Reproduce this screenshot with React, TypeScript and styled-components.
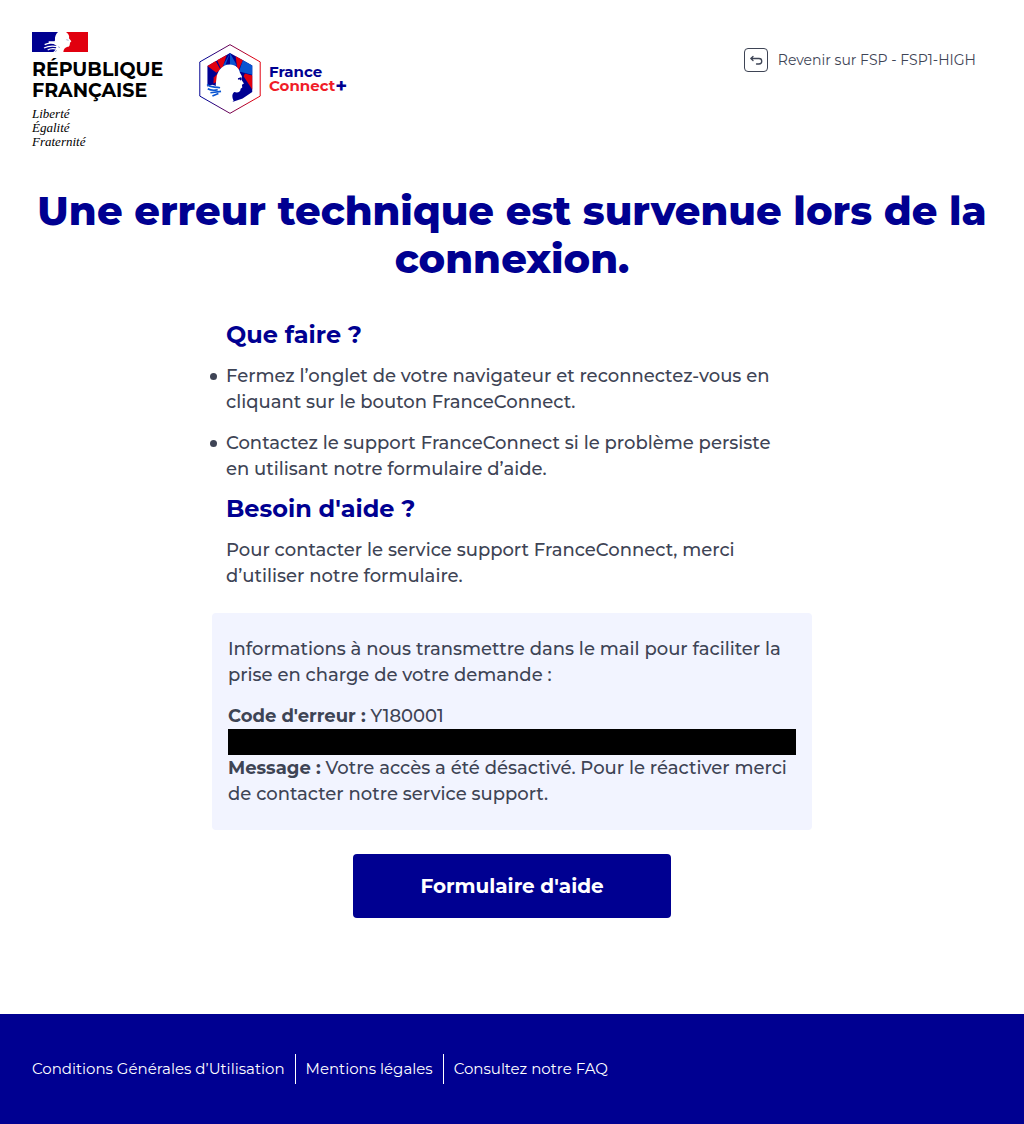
import React from "react";
import styled, { createGlobalStyle } from "styled-components";

const navy = "#000091";
const red = "#e1000f";
const azure = "#0a55d1";
const grey = "#3e4455";
const sans = `Montserrat, Inter, "Open Sans", "Liberation Sans", sans-serif`;

const GlobalStyle = createGlobalStyle`
  * { box-sizing: border-box; }
  body { margin: 0; background: #fff; color: ${grey}; font-family: ${sans}; }
  h1, h2, p, ul { margin: 0; padding: 0; }
`;

const Page = styled.div`
  display: flex;
  flex-direction: column;
  min-height: 100vh;
`;

const Header = styled.header`
  display: flex;
  align-items: flex-start;
  gap: 40px;
  padding: 32px 48px 0 32px;
`;

const StateLogo = styled.div`
  display: flex;
  flex-direction: column;
  width: 127px;
`;

const Flag = styled.svg`
  display: block;
  width: 56px;
  height: 20px;
`;

const StateName = styled.span`
  margin: 7px 0 6px;
  color: #000;
  font: 700 19px/21px ${sans};
  white-space: nowrap;
`;

const Motto = styled.span`
  color: #000;
  font: italic 400 13px/14px "Liberation Serif", serif;
`;

const ServiceLogo = styled.div`
  display: flex;
  align-items: center;
  gap: 8px;
  margin-top: 12px;
`;

const Hexagon = styled.svg`
  display: block;
  width: 62px;
  height: 70px;
`;

const ServiceName = styled.span<{ $color: string }>`
  display: flex;
  align-items: center;
  height: 14px;
  color: ${(p) => p.$color};
  font: 700 15px/14px ${sans};
`;

const Plus = styled.span`
  color: ${navy};
  font-size: 20px;
  font-weight: 700;
`;

const BackLink = styled.a`
  display: flex;
  align-items: center;
  gap: 10px;
  margin: 16px 0 0 auto;
  color: ${grey};
  font-size: 14px;
  line-height: 24px;
  font-weight: 400;
  text-decoration: none;
`;

const BackIcon = styled.svg`
  display: block;
  width: 24px;
  height: 24px;
`;

const Main = styled.main`
  display: flex;
  flex: 1;
  flex-direction: column;
  align-items: center;
  padding: 38px 32px 96px;
`;

const Title = styled.h1`
  margin-bottom: 36px;
  color: ${navy};
  font-size: 40px;
  line-height: 48px;
  font-weight: 800;
  text-align: center;
`;

const Content = styled.div`
  display: flex;
  flex-direction: column;
  gap: 24px;
  width: 100%;
  max-width: 600px;
`;

const Sections = styled.div`
  display: flex;
  flex-direction: column;
  gap: 11px;
  padding: 0 14px;
`;

const Subtitle = styled.h2`
  padding-bottom: 1px;
  color: ${navy};
  font-size: 24px;
  line-height: 32px;
  font-weight: 700;
`;

const Text = styled.p`
  font-size: 18px;
  line-height: 26px;
  font-weight: 500;
`;

const Steps = styled.ul`
  display: flex;
  flex-direction: column;
  gap: 15px;
  list-style: none;
`;

const Step = styled.li`
  display: flex;
  gap: 9px;
  margin-left: -16px;

  &::before {
    content: "";
    flex: none;
    width: 7px;
    height: 7px;
    margin-top: 10px;
    border-radius: 50%;
    background: ${grey};
  }
`;

const InfoBox = styled.section`
  display: flex;
  flex-direction: column;
  gap: 15px;
  padding: 23px 16px;
  border-radius: 4px;
  background: #f2f4ff;
`;

const Redacted = styled.div`
  height: 26px;
  background: #000;
`;

const HelpButton = styled.button`
  align-self: center;
  width: 318px;
  max-width: 100%;
  height: 64px;
  border: 0;
  border-radius: 4px;
  background: ${navy};
  color: #fff;
  font: 700 20px/24px ${sans};
  cursor: pointer;
`;

const Footer = styled.footer`
  padding: 40px 32px;
  background: ${navy};
`;

const FooterNav = styled.nav`
  display: flex;
  flex-wrap: wrap;
`;

const FooterLink = styled.a`
  padding: 0 10px;
  color: #fff;
  font-size: 15px;
  line-height: 30px;
  text-decoration: none;

  &:first-child { padding-left: 0; }
  & + & { border-left: 1px solid #fff; }
`;

const FrenchFlag = () => (
  <Flag viewBox="0 0 168 60" aria-hidden="true">
    <path fill={navy} d="M0 0H78C72 6 68 14 69 24L66 36 74 42 70 54 64 60H0Z" />
    <path fill={red} d="M102 0H168V60H94C95 51 99 46 107 44C114 44 112 38 114 35C112 32 116 31 118 28L111 19C113 12 110 6 102 0Z" />
    <path fill="none" stroke="#fff" strokeWidth="4" d="M38 38C48 32 60 32 73 36M36 48C48 42 58 40 76 44M47 54C55 49 64 48 77 52M50 30H73" />
    <path fill="none" stroke="#7d86bd" strokeWidth="2" d="M103 23L110 25M78 44L84 47M75 55L68 60" />
  </Flag>
);

const MarianneHexagon = () => (
  <Hexagon viewBox="12 11 186 211" aria-hidden="true">
    <defs>
      <linearGradient id="edge" x1="0" x2="1">
        <stop offset="0.1" stopColor={navy} />
        <stop offset="0.9" stopColor={red} />
      </linearGradient>
    </defs>
    <path fill="none" stroke="url(#edge)" strokeWidth="3" strokeLinejoin="round" d="M105 13L196 65V168L105 220L14 168V65Z" />
    <path fill={navy} d="M105 38L172 76V156L143 175 112 186 60 150 37 142V77Z" />
    <path fill={red} d="M37 77L62 62 76 88 64 98Z" />
    <path fill={red} d="M66 60L95 44 84 78 78 86Z" />
    <path fill={azure} d="M105 38L126 76 84 76Z" />
    <path fill={navy} d="M105 38L105 76 92 72Z" />
    <path fill={red} d="M122 48L144 60 130 92 126 78Z" />
    <path fill={azure} d="M144 60L172 76V104L132 94Z" />
    <path fill={red} d="M150 100L172 106V148L146 108Z" />
    <path fill={red} d="M56 112L70 98 68 124 55 130Z" />
    <path fill="#fff" d="M62 134L64 116C66 92 82 73 104 73C124 73 133 86 135 98L141 108 139 118 147 130 141 134 142 142 137 146C137 157 128 158 118 156C110 162 111 172 116 183L105 192 56 165 66 153Z" />
    <path fill="#fff" d="M36 140L51 134 69 139 76 146 62 154 79 160 63 163 70 174 36 170Z" />
    <path fill="none" stroke={azure} strokeWidth="5" d="M36 133C46 143 55 139 75 143M38 146C49 152 55 152 68 149M46 158L78 154M52 168L70 160" />
    <path fill={navy} d="M129 114L138 111 140 116 136 122 134 117 129 119Z" />
  </Hexagon>
);

const ReturnIcon = () => (
  <BackIcon viewBox="0 0 24 24" fill="none" stroke={grey} aria-hidden="true">
    <rect x="0.5" y="0.5" width="23" height="23" rx="3.5" />
    <path strokeWidth="1.3" strokeLinecap="round" strokeLinejoin="round" d="M9 8.5L6.8 10.5 9 12.5M6.8 10.5H15A2.7 2.7 0 0 1 15 16H12.5" />
  </BackIcon>
);

const footerLinks = ["Conditions Générales d’Utilisation", "Mentions légales", "Consultez notre FAQ"];

export default function App() {
  return (
    <Page>
      <GlobalStyle />
      <Header>
        <StateLogo>
          <FrenchFlag />
          <StateName>RÉPUBLIQUE<br />FRANÇAISE</StateName>
          <Motto>Liberté<br />Égalité<br />Fraternité</Motto>
        </StateLogo>
        <ServiceLogo>
          <MarianneHexagon />
          <div>
            <ServiceName $color={navy}>France</ServiceName>
            <ServiceName $color="#f01c28">Connect<Plus>+</Plus></ServiceName>
          </div>
        </ServiceLogo>
        <BackLink href="#retour">
          <ReturnIcon />
          Revenir sur FSP - FSP1-HIGH
        </BackLink>
      </Header>
      <Main>
        <Title>Une erreur technique est survenue lors de la connexion.</Title>
        <Content>
          <Sections>
            <Subtitle>Que faire ?</Subtitle>
            <Steps>
              <Step>
                <Text>Fermez l’onglet de votre navigateur et reconnectez-vous en cliquant sur le bouton FranceConnect.</Text>
              </Step>
              <Step>
                <Text>Contactez le support FranceConnect si le problème persiste en utilisant notre formulaire d’aide.</Text>
              </Step>
            </Steps>
            <Subtitle>Besoin d'aide ?</Subtitle>
            <Text>Pour contacter le service support FranceConnect, merci d’utiliser notre formulaire.</Text>
          </Sections>
          <InfoBox>
            <Text>Informations à nous transmettre dans le mail pour faciliter la prise en charge de votre demande :</Text>
            <div>
              <Text><strong>Code d'erreur :</strong> Y180001</Text>
              <Redacted />
              <Text><strong>Message :</strong> Votre accès a été désactivé. Pour le réactiver merci de contacter notre service support.</Text>
            </div>
          </InfoBox>
          <HelpButton type="button">Formulaire d'aide</HelpButton>
        </Content>
      </Main>
      <Footer>
        <FooterNav aria-label="Pied de page">
          {footerLinks.map((label) => (
            <FooterLink key={label} href="#footer">{label}</FooterLink>
          ))}
        </FooterNav>
      </Footer>
    </Page>
  );
}
